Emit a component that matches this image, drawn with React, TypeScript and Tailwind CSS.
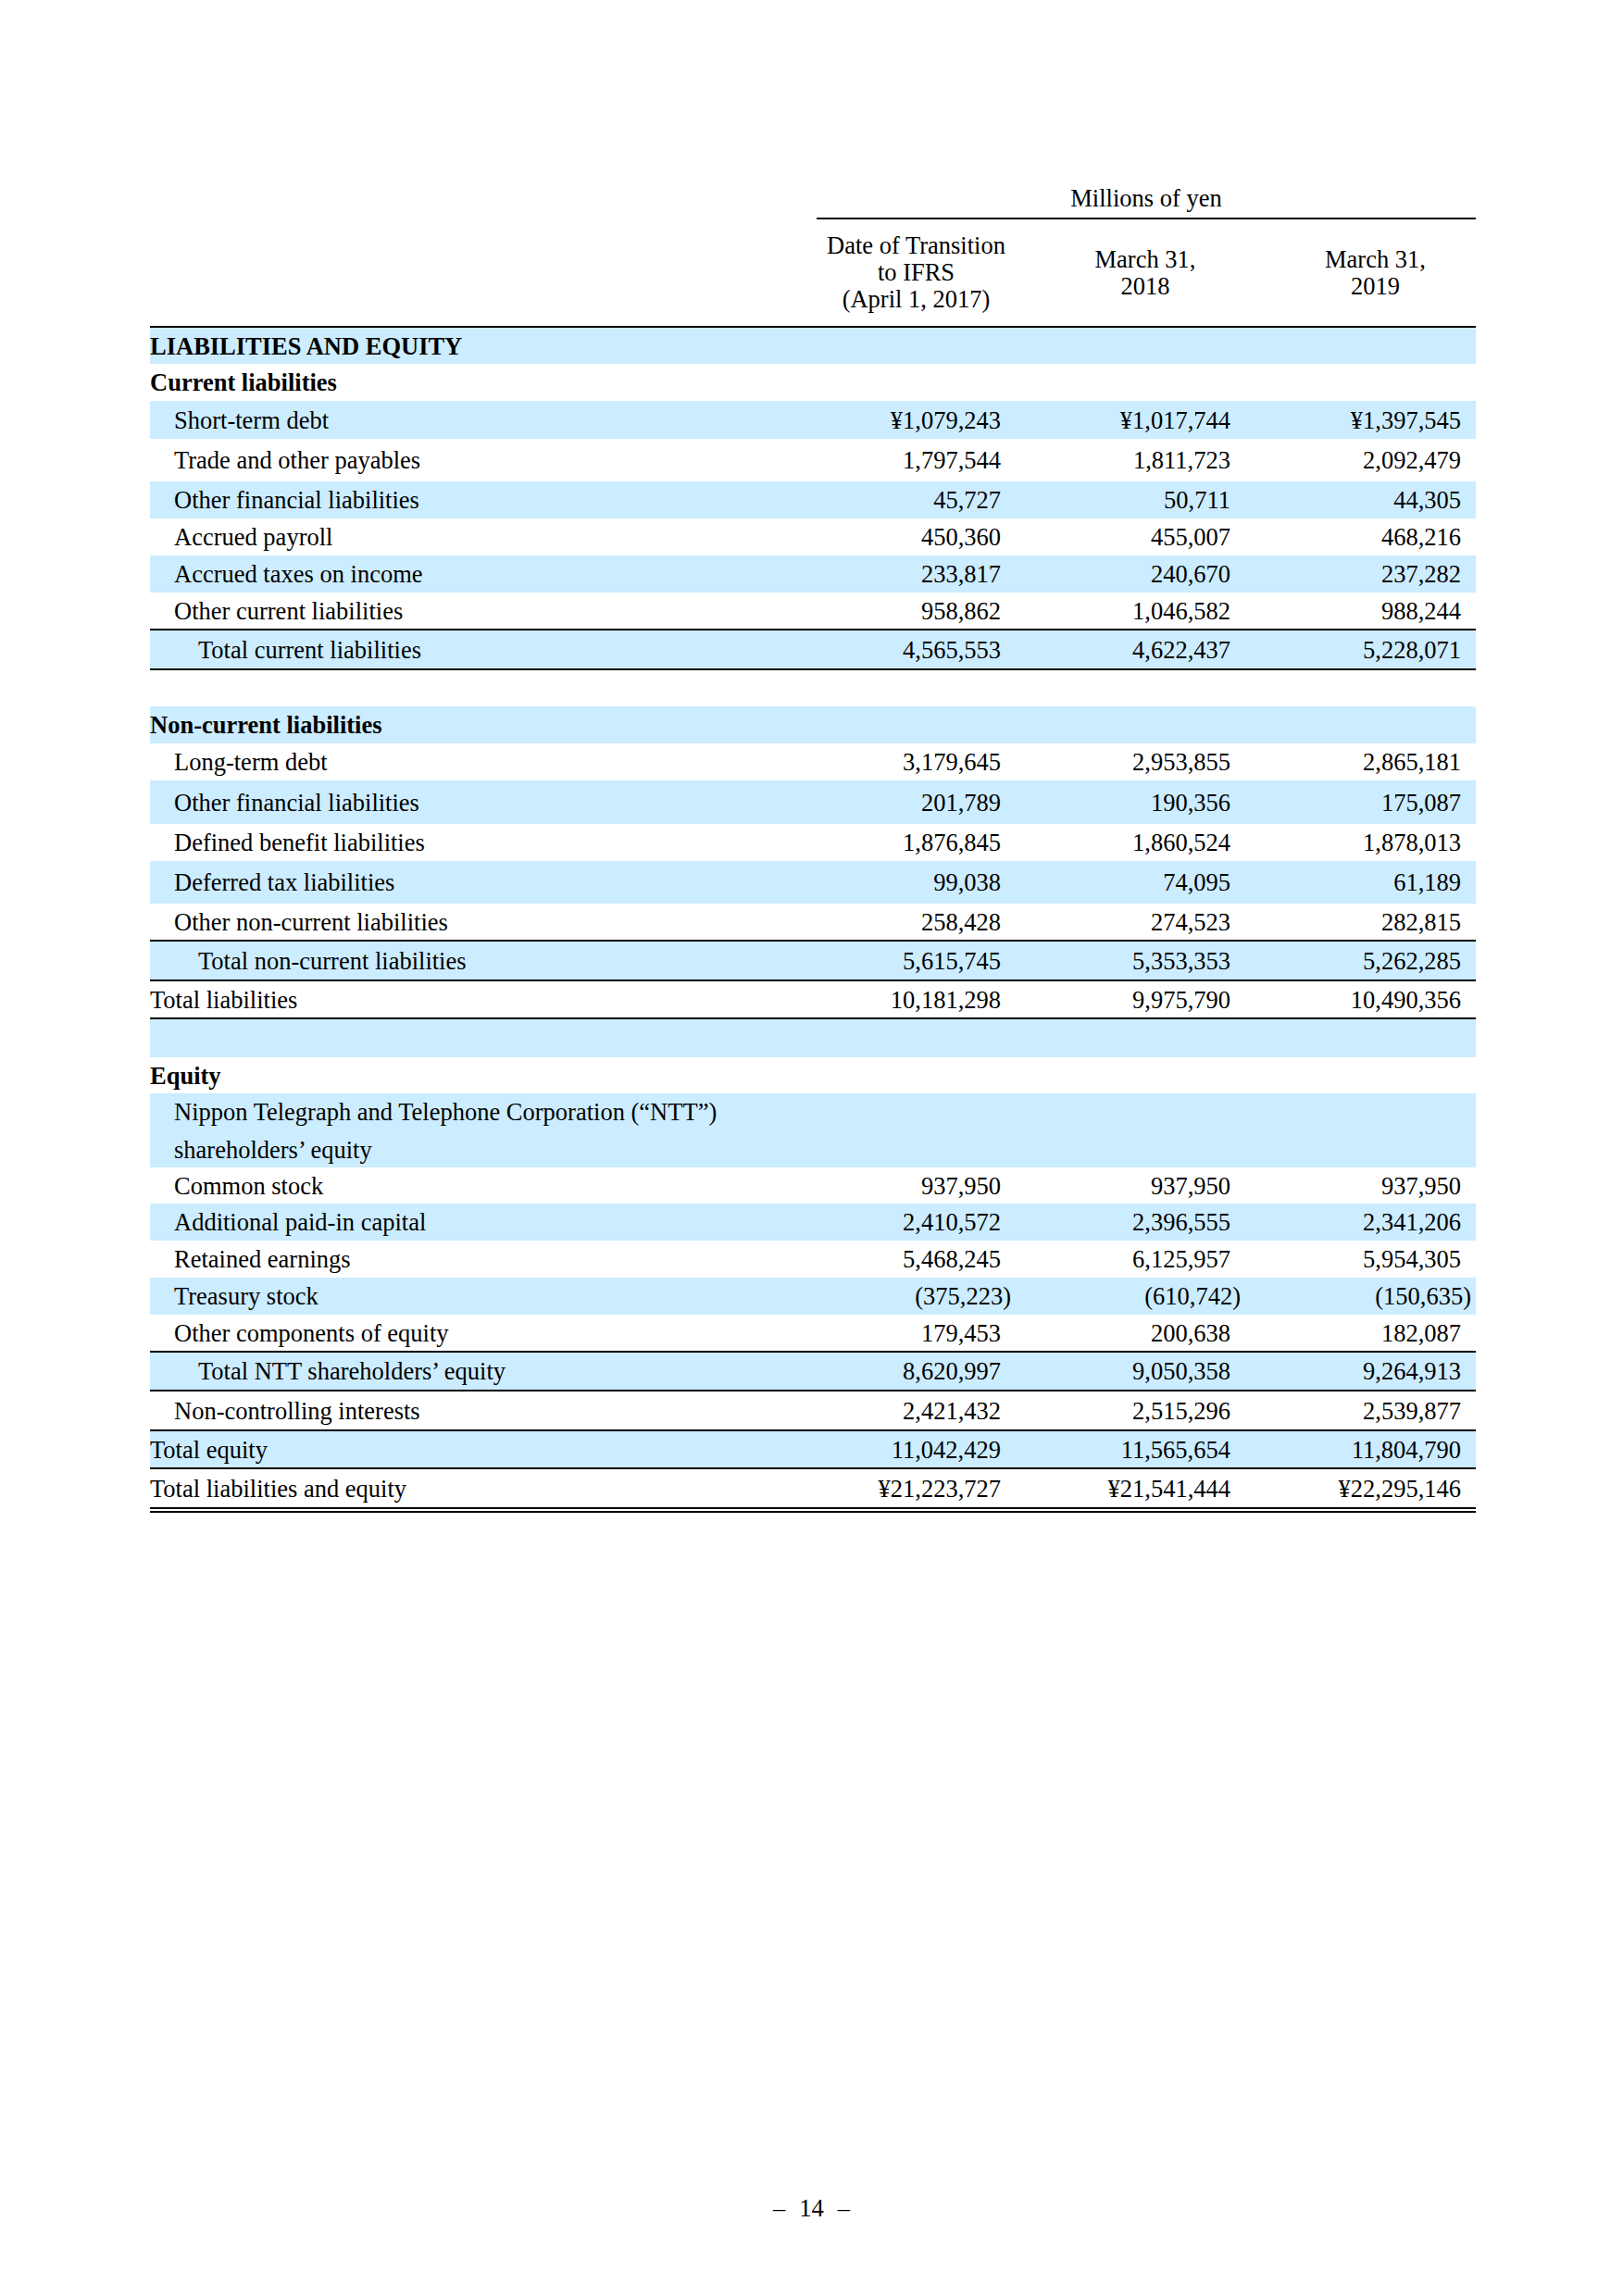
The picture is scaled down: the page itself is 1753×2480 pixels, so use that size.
import React from "react";

type Row = {
  label?: React.ReactNode;
  h: number;
  band?: boolean;
  bold?: boolean;
  indent?: 0 | 1 | 2;
  vals?: string[];
  bt?: boolean;
  bb?: boolean;
  double?: boolean;
};

const rows: Row[] = [
  { label: "LIABILITIES AND EQUITY", h: 39, band: true, bold: true },
  { label: "Current liabilities", h: 40, bold: true },
  { label: "Short-term debt", h: 41, band: true, indent: 1, vals: ["¥1,079,243", "¥1,017,744", "¥1,397,545"] },
  { label: "Trade and other payables", h: 46, indent: 1, vals: ["1,797,544", "1,811,723", "2,092,479"] },
  { label: "Other financial liabilities", h: 40, band: true, indent: 1, vals: ["45,727", "50,711", "44,305"] },
  { label: "Accrued payroll", h: 40, indent: 1, vals: ["450,360", "455,007", "468,216"] },
  { label: "Accrued taxes on income", h: 40, band: true, indent: 1, vals: ["233,817", "240,670", "237,282"] },
  { label: "Other current liabilities", h: 39, indent: 1, vals: ["958,862", "1,046,582", "988,244"] },
  { label: "Total current liabilities", h: 45, band: true, indent: 2, bt: true, bb: true, vals: ["4,565,553", "4,622,437", "5,228,071"] },
  { h: 39 },
  { label: "Non-current liabilities", h: 40, band: true, bold: true },
  { label: "Long-term debt", h: 40, indent: 1, vals: ["3,179,645", "2,953,855", "2,865,181"] },
  { label: "Other financial liabilities", h: 47, band: true, indent: 1, vals: ["201,789", "190,356", "175,087"] },
  { label: "Defined benefit liabilities", h: 40, indent: 1, vals: ["1,876,845", "1,860,524", "1,878,013"] },
  { label: "Deferred tax liabilities", h: 46, band: true, indent: 1, vals: ["99,038", "74,095", "61,189"] },
  { label: "Other non-current liabilities", h: 39, indent: 1, vals: ["258,428", "274,523", "282,815"] },
  { label: "Total non-current liabilities", h: 45, band: true, indent: 2, bt: true, bb: true, vals: ["5,615,745", "5,353,353", "5,262,285"] },
  { label: "Total liabilities", h: 41, bb: true, vals: ["10,181,298", "9,975,790", "10,490,356"] },
  { h: 41, band: true },
  { label: "Equity", h: 39, bold: true },
  {
    label: (
      <span className="leading-[41px]">
        Nippon Telegraph and Telephone Corporation (“NTT”)
        <br />
        shareholders’ equity
      </span>
    ),
    h: 80,
    band: true,
    indent: 1,
  },
  { label: "Common stock", h: 39, indent: 1, vals: ["937,950", "937,950", "937,950"] },
  { label: "Additional paid-in capital", h: 40, band: true, indent: 1, vals: ["2,410,572", "2,396,555", "2,341,206"] },
  { label: "Retained earnings", h: 40, indent: 1, vals: ["5,468,245", "6,125,957", "5,954,305"] },
  { label: "Treasury stock", h: 40, band: true, indent: 1, vals: ["(375,223)", "(610,742)", "(150,635)"] },
  { label: "Other components of equity", h: 39, indent: 1, vals: ["179,453", "200,638", "182,087"] },
  { label: "Total NTT shareholders’ equity", h: 44, band: true, indent: 2, bt: true, bb: true, vals: ["8,620,997", "9,050,358", "9,264,913"] },
  { label: "Non-controlling interests", h: 43, indent: 1, bb: true, vals: ["2,421,432", "2,515,296", "2,539,877"] },
  { label: "Total equity", h: 41, band: true, bb: true, vals: ["11,042,429", "11,565,654", "11,804,790"] },
  { label: "Total liabilities and equity", h: 47, double: true, vals: ["¥21,223,727", "¥21,541,444", "¥22,295,146"] },
];

const indentClass = ["pl-0", "pl-[26px]", "pl-[52px]"];

function Value({ v }: { v: string }) {
  const neg = v.startsWith("(");
  return (
    <div className="flex items-center justify-end pr-4">
      <span className={neg ? "-mr-[11px]" : ""}>{v}</span>
    </div>
  );
}

function TableRow({ row }: { row: Row }) {
  return (
    <div
      style={{ height: row.h }}
      className={
        "grid grid-cols-[720px_215px_248px_249px] items-center border-black " +
        (row.band ? "bg-[#ccecff] " : "bg-white ") +
        (row.bt ? "border-t-2 " : "") +
        (row.bb ? "border-b-2 " : "") +
        (row.double ? "border-b-[6px] border-double" : "")
      }
    >
      <div className={(row.bold ? "font-bold " : "") + indentClass[row.indent ?? 0]}>{row.label}</div>
      {row.vals?.map((v, i) => <Value key={i} v={v} />)}
    </div>
  );
}

export default function App() {
  return (
    <div className="w-[1753px] h-[2480px] bg-white text-black font-['Liberation_Serif',serif] text-[26.5px] leading-[30px] flex flex-col">
      <div className="pt-[194px] pl-[162px] w-[1594px]">
        {/* column header */}
        <div className="grid grid-cols-[720px_215px_248px_249px]">
          <div />
          <div className="col-span-3 h-[43px] border-b-2 border-black flex items-center justify-center pb-[2px]">
            Millions of yen
          </div>
        </div>
        <div className="grid grid-cols-[720px_215px_248px_249px] h-[117px] border-b-2 border-black items-center text-center leading-[29px]">
          <div />
          <div>
            Date of Transition
            <br />
            to IFRS
            <br />
            (April 1, 2017)
          </div>
          <div className="pl-8">
            March 31,
            <br />
            2018
          </div>
          <div className="pl-8">
            March 31,
            <br />
            2019
          </div>
        </div>
        {rows.map((r, i) => (
          <TableRow key={i} row={r} />
        ))}
      </div>
      <div className="mt-auto pb-[80px] flex justify-center gap-[15px]">
        <span>–</span>
        <span>14</span>
        <span>–</span>
      </div>
    </div>
  );
}
